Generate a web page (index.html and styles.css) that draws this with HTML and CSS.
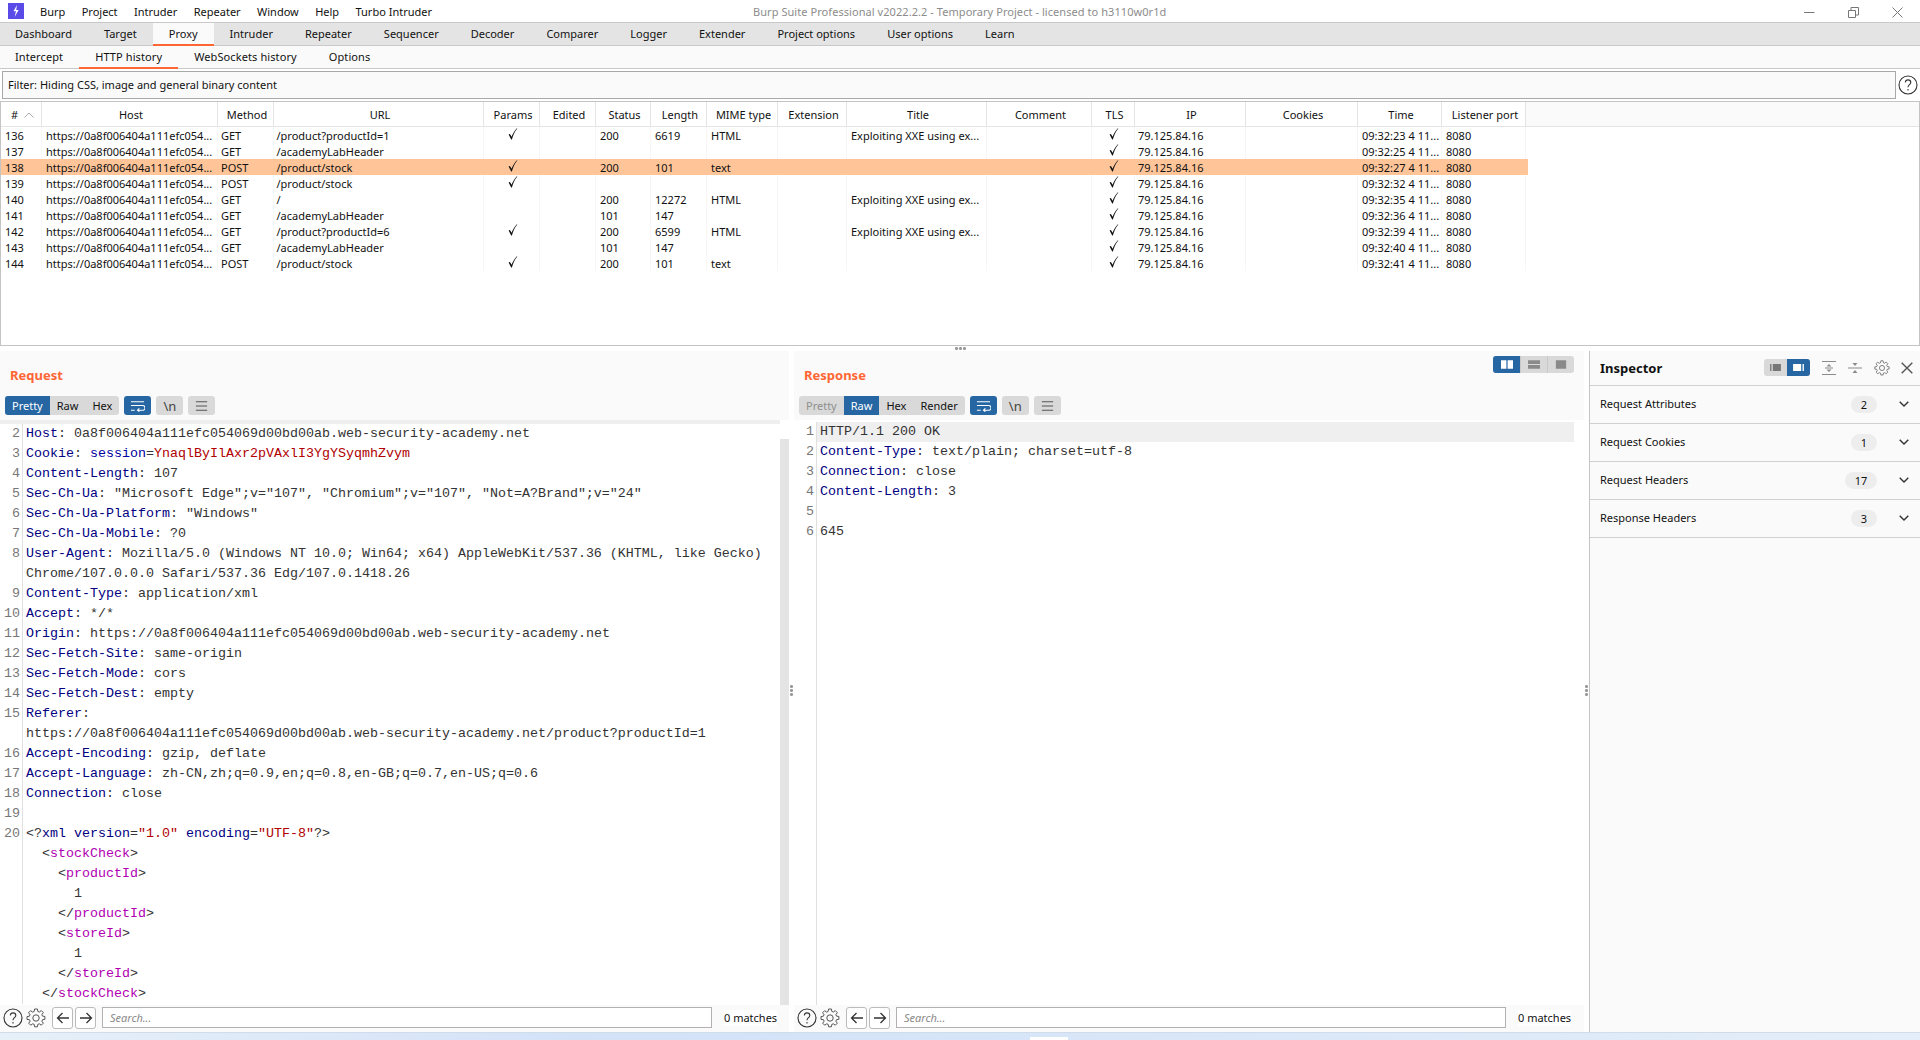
FILE: index.html
```html
<!DOCTYPE html>
<html lang="en">
<head>
<meta charset="utf-8">
<title>Burp Suite Professional</title>
<link rel="stylesheet" href="styles.css">
</head>
<body>
<svg class="defs" width="0" height="0"><defs><g id="gearpath"><path d="M8.6 1h2.8l.4 2.4 1.5.6 2-1.4 2 2-1.4 2 .6 1.5 2.4.4v2.8l-2.4.4-.6 1.5 1.4 2-2 2-2-1.4-1.5.6-.4 2.4H8.6l-.4-2.4-1.5-.6-2 1.4-2-2 1.4-2-.6-1.5L1 11.4V8.6l2.4-.4.6-1.5-1.4-2 2-2 2 1.4 1.5-.6Z"/><circle cx="10" cy="10" r="3.2"/></g><path id="ck" d="M.6 6.6 3.2 11.4 3.9 11.4C5 7.5 6.8 3.5 9.4.6L9 .3C6.7 2.6 4.7 5.7 3.6 8.8L1.9 5.9Z"/></defs></svg>
<div class="app">
  <header class="titlebar">
    <svg class="logo" viewBox="0 0 16 16"><rect width="16" height="16" fill="#5a4be8"/><path d="M9 2 5.5 8.3H8L6.6 14 10.6 7H8.2Z" fill="#fff"/></svg>
    <nav class="menu"><span>Burp</span><span>Project</span><span>Intruder</span><span>Repeater</span><span>Window</span><span>Help</span><span>Turbo Intruder</span></nav>
    <div class="apptitle">Burp Suite Professional v2022.2.2 - Temporary Project - licensed to h3110w0r1d</div>
    <div class="winctl">
      <svg viewBox="0 0 11 11"><path d="M0 5.5H10.5"/></svg>
      <svg viewBox="0 0 11 11"><path d="M.5 3.5H7.5V10.5H.5ZM3 3.5V.5H10.5V8H7.5"/></svg>
      <svg viewBox="0 0 11 11"><path d="M.5.5 10.5 10.5M10.5.5 .5 10.5"/></svg>
    </div>
  </header>
  <div class="tabs main">
    <span>Dashboard</span><span>Target</span><span class="on">Proxy</span><span>Intruder</span><span>Repeater</span><span>Sequencer</span><span>Decoder</span><span>Comparer</span><span>Logger</span><span>Extender</span><span>Project options</span><span>User options</span><span>Learn</span>
  </div>
  <div class="tabs sub">
    <span>Intercept</span><span class="on">HTTP history</span><span>WebSockets history</span><span>Options</span>
  </div>
  <div class="filterrow">
    <div class="filter">Filter: Hiding CSS, image and general binary content</div>
    <svg class="help big" viewBox="0 0 20 20"><circle cx="10" cy="10" r="9"/><path d="M7.3 7.4C7.5 5.6 8.7 4.9 10 4.9c1.6 0 2.8 1 2.8 2.5 0 2.3-2.8 2.3-2.8 4.8"/><path d="M10 14v1.4"/></svg>
  </div>
  <div class="table">
    <div class="row head">
      <div class="c n">#<svg class="sort" viewBox="0 0 10 6"><path d="M.5 5.5 5 1l4.5 4.5"/></svg></div><div class="c host">Host</div><div class="c meth">Method</div><div class="c url">URL</div><div class="c par">Params</div><div class="c edi">Edited</div><div class="c sta">Status</div><div class="c len">Length</div><div class="c mim">MIME type</div><div class="c ext">Extension</div><div class="c tit">Title</div><div class="c com">Comment</div><div class="c tls">TLS</div><div class="c ip">IP</div><div class="c coo">Cookies</div><div class="c tim">Time</div><div class="c lis">Listener port</div>
    </div>
    <div class="row"><div class="c n">136</div><div class="c host">https://0a8f006404a111efc054...</div><div class="c meth">GET</div><div class="c url">/product?productId=1</div><div class="c par"><svg class="ck" viewBox="0 0 10 12"><use href="#ck"/></svg></div><div class="c edi"></div><div class="c sta">200</div><div class="c len">6619</div><div class="c mim">HTML</div><div class="c ext"></div><div class="c tit">Exploiting XXE using ex...</div><div class="c com"></div><div class="c tls"><svg class="ck" viewBox="0 0 10 12"><use href="#ck"/></svg></div><div class="c ip">79.125.84.16</div><div class="c coo"></div><div class="c tim">09:32:23 4 11...</div><div class="c lis">8080</div></div>
    <div class="row"><div class="c n">137</div><div class="c host">https://0a8f006404a111efc054...</div><div class="c meth">GET</div><div class="c url">/academyLabHeader</div><div class="c par"></div><div class="c edi"></div><div class="c sta"></div><div class="c len"></div><div class="c mim"></div><div class="c ext"></div><div class="c tit"></div><div class="c com"></div><div class="c tls"><svg class="ck" viewBox="0 0 10 12"><use href="#ck"/></svg></div><div class="c ip">79.125.84.16</div><div class="c coo"></div><div class="c tim">09:32:25 4 11...</div><div class="c lis">8080</div></div>
    <div class="row sel"><div class="c n">138</div><div class="c host">https://0a8f006404a111efc054...</div><div class="c meth">POST</div><div class="c url">/product/stock</div><div class="c par"><svg class="ck" viewBox="0 0 10 12"><use href="#ck"/></svg></div><div class="c edi"></div><div class="c sta">200</div><div class="c len">101</div><div class="c mim">text</div><div class="c ext"></div><div class="c tit"></div><div class="c com"></div><div class="c tls"><svg class="ck" viewBox="0 0 10 12"><use href="#ck"/></svg></div><div class="c ip">79.125.84.16</div><div class="c coo"></div><div class="c tim">09:32:27 4 11...</div><div class="c lis">8080</div></div>
    <div class="row"><div class="c n">139</div><div class="c host">https://0a8f006404a111efc054...</div><div class="c meth">POST</div><div class="c url">/product/stock</div><div class="c par"><svg class="ck" viewBox="0 0 10 12"><use href="#ck"/></svg></div><div class="c edi"></div><div class="c sta"></div><div class="c len"></div><div class="c mim"></div><div class="c ext"></div><div class="c tit"></div><div class="c com"></div><div class="c tls"><svg class="ck" viewBox="0 0 10 12"><use href="#ck"/></svg></div><div class="c ip">79.125.84.16</div><div class="c coo"></div><div class="c tim">09:32:32 4 11...</div><div class="c lis">8080</div></div>
    <div class="row"><div class="c n">140</div><div class="c host">https://0a8f006404a111efc054...</div><div class="c meth">GET</div><div class="c url">/</div><div class="c par"></div><div class="c edi"></div><div class="c sta">200</div><div class="c len">12272</div><div class="c mim">HTML</div><div class="c ext"></div><div class="c tit">Exploiting XXE using ex...</div><div class="c com"></div><div class="c tls"><svg class="ck" viewBox="0 0 10 12"><use href="#ck"/></svg></div><div class="c ip">79.125.84.16</div><div class="c coo"></div><div class="c tim">09:32:35 4 11...</div><div class="c lis">8080</div></div>
    <div class="row"><div class="c n">141</div><div class="c host">https://0a8f006404a111efc054...</div><div class="c meth">GET</div><div class="c url">/academyLabHeader</div><div class="c par"></div><div class="c edi"></div><div class="c sta">101</div><div class="c len">147</div><div class="c mim"></div><div class="c ext"></div><div class="c tit"></div><div class="c com"></div><div class="c tls"><svg class="ck" viewBox="0 0 10 12"><use href="#ck"/></svg></div><div class="c ip">79.125.84.16</div><div class="c coo"></div><div class="c tim">09:32:36 4 11...</div><div class="c lis">8080</div></div>
    <div class="row"><div class="c n">142</div><div class="c host">https://0a8f006404a111efc054...</div><div class="c meth">GET</div><div class="c url">/product?productId=6</div><div class="c par"><svg class="ck" viewBox="0 0 10 12"><use href="#ck"/></svg></div><div class="c edi"></div><div class="c sta">200</div><div class="c len">6599</div><div class="c mim">HTML</div><div class="c ext"></div><div class="c tit">Exploiting XXE using ex...</div><div class="c com"></div><div class="c tls"><svg class="ck" viewBox="0 0 10 12"><use href="#ck"/></svg></div><div class="c ip">79.125.84.16</div><div class="c coo"></div><div class="c tim">09:32:39 4 11...</div><div class="c lis">8080</div></div>
    <div class="row"><div class="c n">143</div><div class="c host">https://0a8f006404a111efc054...</div><div class="c meth">GET</div><div class="c url">/academyLabHeader</div><div class="c par"></div><div class="c edi"></div><div class="c sta">101</div><div class="c len">147</div><div class="c mim"></div><div class="c ext"></div><div class="c tit"></div><div class="c com"></div><div class="c tls"><svg class="ck" viewBox="0 0 10 12"><use href="#ck"/></svg></div><div class="c ip">79.125.84.16</div><div class="c coo"></div><div class="c tim">09:32:40 4 11...</div><div class="c lis">8080</div></div>
    <div class="row"><div class="c n">144</div><div class="c host">https://0a8f006404a111efc054...</div><div class="c meth">POST</div><div class="c url">/product/stock</div><div class="c par"><svg class="ck" viewBox="0 0 10 12"><use href="#ck"/></svg></div><div class="c edi"></div><div class="c sta">200</div><div class="c len">101</div><div class="c mim">text</div><div class="c ext"></div><div class="c tit"></div><div class="c com"></div><div class="c tls"><svg class="ck" viewBox="0 0 10 12"><use href="#ck"/></svg></div><div class="c ip">79.125.84.16</div><div class="c coo"></div><div class="c tim">09:32:41 4 11...</div><div class="c lis">8080</div></div>
  </div>
  <div class="grip top"><i></i><i></i><i></i></div>
  <div class="lower">
    <section class="pane req">
      <div class="panehead">
        <h2>Request</h2>
        <div class="tools">
          <div class="seg"><span class="on">Pretty</span><span>Raw</span><span>Hex</span></div>
          <div class="tbtn on"><svg viewBox="0 0 16 12"><path d="M1 1.5H15M1 5.5H13.5a2 2 0 0 1 0 5H8M10 8.5 8 10.5 10 12M1 10.5H5"/></svg></div>
          <div class="tbtn nl">\n</div>
          <div class="tbtn"><svg viewBox="0 0 16 12"><path d="M2 1.5H14M2 6H14M2 10.5H14"/></svg></div>
        </div>
      </div>
      <div class="editor">
        <div class="code">
          <div class="l hl"></div>
          <div class="l"><b>2</b><p><em>Host</em>: 0a8f006404a111efc054069d00bd00ab.web-security-academy.net</p></div>
          <div class="l"><b>3</b><p><em>Cookie</em>: <em class="k">session</em>=<u>YnaqlByIlAxr2pVAxlI3YgYSyqmhZvym</u></p></div>
          <div class="l"><b>4</b><p><em>Content-Length</em>: 107</p></div>
          <div class="l"><b>5</b><p><em>Sec-Ch-Ua</em>: "Microsoft Edge";v="107", "Chromium";v="107", "Not=A?Brand";v="24"</p></div>
          <div class="l"><b>6</b><p><em>Sec-Ch-Ua-Platform</em>: "Windows"</p></div>
          <div class="l"><b>7</b><p><em>Sec-Ch-Ua-Mobile</em>: ?0</p></div>
          <div class="l"><b>8</b><p><em>User-Agent</em>: Mozilla/5.0 (Windows NT 10.0; Win64; x64) AppleWebKit/537.36 (KHTML, like Gecko)<br>Chrome/107.0.0.0 Safari/537.36 Edg/107.0.1418.26</p></div>
          <div class="l"><b>9</b><p><em>Content-Type</em>: application/xml</p></div>
          <div class="l"><b>10</b><p><em>Accept</em>: */*</p></div>
          <div class="l"><b>11</b><p><em>Origin</em>: https://0a8f006404a111efc054069d00bd00ab.web-security-academy.net</p></div>
          <div class="l"><b>12</b><p><em>Sec-Fetch-Site</em>: same-origin</p></div>
          <div class="l"><b>13</b><p><em>Sec-Fetch-Mode</em>: cors</p></div>
          <div class="l"><b>14</b><p><em>Sec-Fetch-Dest</em>: empty</p></div>
          <div class="l"><b>15</b><p><em>Referer</em>:<br>https://0a8f006404a111efc054069d00bd00ab.web-security-academy.net/product?productId=1</p></div>
          <div class="l"><b>16</b><p><em>Accept-Encoding</em>: gzip, deflate</p></div>
          <div class="l"><b>17</b><p><em>Accept-Language</em>: zh-CN,zh;q=0.9,en;q=0.8,en-GB;q=0.7,en-US;q=0.6</p></div>
          <div class="l"><b>18</b><p><em>Connection</em>: close</p></div>
          <div class="l"><b>19</b><p></p></div>
          <div class="l"><b>20</b><p>&lt;?<em>xml</em> <em>version</em>=<u>"1.0"</u> <em>encoding</em>=<u>"UTF-8"</u>?&gt;</p></div>
          <div class="l"><b></b><p class="i1">&lt;<s>stockCheck</s>&gt;</p></div>
          <div class="l"><b></b><p class="i2">&lt;<s>productId</s>&gt;</p></div>
          <div class="l"><b></b><p class="i3">1</p></div>
          <div class="l"><b></b><p class="i2">&lt;/<s>productId</s>&gt;</p></div>
          <div class="l"><b></b><p class="i2">&lt;<s>storeId</s>&gt;</p></div>
          <div class="l"><b></b><p class="i3">1</p></div>
          <div class="l"><b></b><p class="i2">&lt;/<s>storeId</s>&gt;</p></div>
          <div class="l"><b></b><p class="i1">&lt;/<s>stockCheck</s>&gt;</p></div>
        </div>
        <div class="scroll"></div>
      </div>
      <div class="searchbar">
        <svg class="help" viewBox="0 0 20 20"><circle cx="10" cy="10" r="9"/><path d="M7.3 7.4C7.5 5.6 8.7 4.9 10 4.9c1.6 0 2.8 1 2.8 2.5 0 2.3-2.8 2.3-2.8 4.8"/><path d="M10 14v1.4"/></svg>
        <svg class="gear" viewBox="0 0 20 20"><use href="#gearpath"/></svg>
        <div class="arrow"><svg viewBox="0 0 14 12"><path d="M13 6H2M6.5 1 1.5 6l5 5"/></svg></div>
        <div class="arrow"><svg viewBox="0 0 14 12"><path d="M1 6H12M7.5 1l5 5-5 5"/></svg></div>
        <div class="search">Search...</div>
        <div class="matches">0 matches</div>
      </div>
    </section>
    <div class="splitter"><span class="grip v"><i></i><i></i><i></i></span></div>
    <section class="pane res">
      <div class="panehead">
        <h2>Response</h2>
        <div class="viewtoggle">
          <span class="on"><svg viewBox="0 0 14 10"><path d="M0 0H6.3V10H0ZM7.7 0H14V10H7.7Z"/></svg></span>
          <span><svg viewBox="0 0 14 10"><path d="M0 0H14V4.3H0ZM0 5.7H14V10H0Z"/></svg></span>
          <span><svg viewBox="0 0 14 10"><path d="M1 0H13V10H1Z"/></svg></span>
        </div>
        <div class="tools">
          <div class="seg"><span class="off">Pretty</span><span class="on">Raw</span><span>Hex</span><span>Render</span></div>
          <div class="tbtn on"><svg viewBox="0 0 16 12"><path d="M1 1.5H15M1 5.5H13.5a2 2 0 0 1 0 5H8M10 8.5 8 10.5 10 12M1 10.5H5"/></svg></div>
          <div class="tbtn nl">\n</div>
          <div class="tbtn"><svg viewBox="0 0 16 12"><path d="M2 1.5H14M2 6H14M2 10.5H14"/></svg></div>
        </div>
      </div>
      <div class="editor">
        <div class="code">
          <div class="l cur"><b>1</b><p>HTTP/1.1 200 OK</p></div>
          <div class="l"><b>2</b><p><em>Content-Type</em>: text/plain; charset=utf-8</p></div>
          <div class="l"><b>3</b><p><em>Connection</em>: close</p></div>
          <div class="l"><b>4</b><p><em>Content-Length</em>: 3</p></div>
          <div class="l"><b>5</b><p></p></div>
          <div class="l"><b>6</b><p>645</p></div>
          <div class="l rest"><b></b></div>
        </div>
      </div>
      <div class="searchbar">
        <svg class="help" viewBox="0 0 20 20"><circle cx="10" cy="10" r="9"/><path d="M7.3 7.4C7.5 5.6 8.7 4.9 10 4.9c1.6 0 2.8 1 2.8 2.5 0 2.3-2.8 2.3-2.8 4.8"/><path d="M10 14v1.4"/></svg>
        <svg class="gear" viewBox="0 0 20 20"><use href="#gearpath"/></svg>
        <div class="arrow"><svg viewBox="0 0 14 12"><path d="M13 6H2M6.5 1 1.5 6l5 5"/></svg></div>
        <div class="arrow"><svg viewBox="0 0 14 12"><path d="M1 6H12M7.5 1l5 5-5 5"/></svg></div>
        <div class="search">Search...</div>
        <div class="matches">0 matches</div>
      </div>
    </section>
    <div class="splitter two"><span class="grip v"><i></i><i></i><i></i></span></div>
    <aside class="inspector">
      <div class="ihead">
        <h3>Inspector</h3>
        <div class="itoggle">
          <span><svg viewBox="0 0 12 10"><path d="M0 1H1.5V9H0ZM3 1H12V9H3Z"/></svg></span>
          <span class="on"><svg viewBox="0 0 12 10"><path d="M0 1H9V9H0ZM10.5 1H12V9H10.5Z"/></svg></span>
        </div>
        <svg class="iic" viewBox="0 0 14 14"><path d="M0 .5H14M0 13.5H14M3 7H11"/><path class="fill" d="M7 3 9.5 5.5H4.5ZM7 11 4.5 8.5H9.5Z"/></svg>
        <svg class="iic" viewBox="0 0 14 14"><path d="M0 7H14"/><path class="fill" d="M7 5 4.5 2H9.5ZM7 9 9.5 12H4.5Z"/></svg>
        <svg class="igear" viewBox="0 0 20 20"><use href="#gearpath"/></svg>
        <svg class="iclose" viewBox="0 0 12 12"><path d="M.7.7 11.3 11.3M11.3.7.7 11.3"/></svg>
      </div>
      <div class="irow"><span>Request Attributes</span><i>2</i><svg viewBox="0 0 10 6"><path d="M.7.7 5 5l4.3-4.3"/></svg></div>
      <div class="irow"><span>Request Cookies</span><i>1</i><svg viewBox="0 0 10 6"><path d="M.7.7 5 5l4.3-4.3"/></svg></div>
      <div class="irow"><span>Request Headers</span><i class="w">17</i><svg viewBox="0 0 10 6"><path d="M.7.7 5 5l4.3-4.3"/></svg></div>
      <div class="irow"><span>Response Headers</span><i>3</i><svg viewBox="0 0 10 6"><path d="M.7.7 5 5l4.3-4.3"/></svg></div>
    </aside>
  </div>
  <div class="desk"><span></span></div>
</div>
</body>
</html>
```
FILE: styles.css
```css
* { box-sizing: border-box; }
html, body { margin: 0; height: 100%; }
body { font: 11px/16px "Noto Sans", "Open Sans", sans-serif; color: #111; background: #fff; overflow: hidden; }
p, h2, h3 { margin: 0; }
em, s, u { font-style: normal; text-decoration: none; }
.defs { position: absolute; }
.app { width: 1920px; height: 1040px; display: flex; flex-direction: column; }

.titlebar { height: 23px; flex: none; display: flex; align-items: center; position: relative; border-bottom: 1px solid #c9c9c9; background: #fff; }
.logo { width: 16px; height: 16px; margin: 0 16px 0 8px; flex: none; }
.menu { display: flex; gap: 16.4px; padding-top: 1px; }
.apptitle { position: absolute; left: 753px; top: 4px; color: #8c8c8c; letter-spacing: .06px; }
.winctl { position: absolute; right: 0; top: 0; width: 121px; display: flex; }
.winctl svg { width: 11px; height: 11px; fill: none; stroke: #777; margin-top: 7px; margin-left: 33px; }
.winctl svg:first-child { margin-left: 5px; }

.tabs { display: flex; flex: none; height: 23px; border-bottom: 1px solid #c9c9c9; }
.tabs span { padding: 0 16px; line-height: 22px; position: relative; }
.tabs span:first-child { margin-left: -1px; }
.tabs span.on::after { content: ""; position: absolute; left: 0; right: 0; bottom: -1px; height: 2px; background: #ff6633; }
.tabs.main { background: #e4e4e4; }
.tabs.main span.on { background: #fafafa; }
.tabs.sub { background: #fafafa; }
.tabs.sub span { letter-spacing: .1px; }

.filterrow { height: 32px; flex: none; display: flex; align-items: flex-start; padding-top: 2px; background: #fff; }
.filter { margin-left: 2px; width: 1894px; height: 28px; border: 1px solid #a8a8a8; background: #fafafa; line-height: 25px; padding-left: 5px; }
.help { width: 20px; height: 20px; fill: none; stroke: #333; stroke-width: 1.1; flex: none; }
.help.big { margin: 4px 0 0 2px; }

.table { height: 245px; flex: none; border: 1px solid #c4c4c4; background: #fff; }
.row { display: flex; height: 16px; width: 1527px; }
.row.head { height: 25px; border-bottom: 1px solid #e4e4e4; background: #fafafa; width: auto; }
.row.head .c { text-align: center; line-height: 26px; border-right: 1px solid #e4e4e4; padding: 0 1px 0 4px; background: #fff; }
.row.sel { background: #ffc599; }
.c { padding-left: 4px; white-space: nowrap; overflow: hidden; flex: none; line-height: 18px; height: 100%; border-right: 1px solid #f6f6f6; }
.row.sel .c { border-color: transparent; }
.n { width: 41px; } .host { width: 176px; } .meth { width: 56px; padding-left: 3px; } .url { width: 210px; padding-left: 2.5px; }
.par { width: 56px; text-align: center; padding: 1px 0 0 2px; line-height: 0; } .edi { width: 56px; } .sta { width: 55px; } .len { width: 56px; }
.mim { width: 71px; } .ext { width: 69px; } .tit { width: 140px; } .com { width: 105px; }
.tls { width: 43px; text-align: center; padding: 1px 0 0 2px; line-height: 0; } .ip { width: 111px; padding-left: 3px; } .coo { width: 112px; } .tim { width: 84px; } .lis { width: 84px; }
.sort { width: 10px; height: 6px; fill: none; stroke: #aaa; margin-left: 6px; vertical-align: 1px; }
.ck { width: 10px; height: 12px; fill: #111; }

.grip { display: flex; gap: 1.5px; }
.grip i { width: 2.5px; height: 2.5px; border-radius: 50%; background: #999; }
.grip.top { position: absolute; left: 955px; top: 347px; }
.lower { height: 681px; flex: none; margin-top: 5px; display: flex; min-height: 0; }
.pane { display: flex; flex-direction: column; background: #fff; }
.req { width: 789px; }
.res { width: 790px; }
.splitter { width: 5px; position: relative; background: #fff; }
.grip.v { position: absolute; left: 1px; top: 334px; flex-direction: column; }
.panehead { height: 69px; flex: none; background: #fafafa; padding: 15px 5px 0; position: relative; }
.panehead h2 { font-size: 13px; font-weight: 700; color: #ff6633; line-height: 18px; padding-left: 5px; }
.tools { display: flex; gap: 5px; margin-top: 12px; height: 19px; }
.seg { display: flex; background: #d9d9d9; border-radius: 3px; overflow: hidden; }
.seg span { padding: 0 7px; line-height: 19px; }
.seg .on { background: #2566a3; color: #fff; }
.seg .off { color: #8f8f8f; }
.tbtn { width: 27px; background: #d9d9d9; border-radius: 3px; display: flex; align-items: center; justify-content: center; color: #444; font-size: 13px; }
.tbtn.on { background: #2566a3; }
.tbtn svg { width: 15px; height: 12px; fill: none; stroke: #555; stroke-width: 1.2; }
.tbtn.on svg { stroke: #fff; }
.viewtoggle { position: absolute; right: 10px; top: 5px; display: flex; height: 17px; background: #d9d9d9; border-radius: 3px; overflow: hidden; }
.viewtoggle span { width: 27px; display: flex; align-items: center; justify-content: center; border-left: 1px solid #c9c9c9; }
.viewtoggle span.on { background: #2566a3; border: 0; }
.viewtoggle svg { width: 12px; height: 9px; fill: #8a8a8a; }
.viewtoggle .on svg { fill: #fff; }

.editor { flex: 1; min-height: 0; display: flex; position: relative; overflow: hidden; }
.code { flex: 1; display: flex; flex-direction: column; overflow: hidden; font: 13.33px/20px "Liberation Mono", "Courier New", monospace; color: #333; }
.l { display: flex; min-height: 20px; flex: none; }
.l b { width: 23px; flex: none; font-weight: 400; color: #777; text-align: right; padding-right: 2px; border-right: 1px solid #e0e0e0; }
.l p { padding-left: 3px; white-space: pre; }
.l.hl { min-height: 4px; height: 4px; background: #efefef; }
.l.cur { margin-top: 2px; width: 780px; }
.l.cur p { flex: 1; background: #efefef; }
.l.rest { flex: 1; }
.l em { color: #000080; }
.l em.k { color: #0000a0; }
.l u { color: #b00000; }
.l s { color: #b000b0; }
.i1 { margin-left: 16px; } .i2 { margin-left: 32px; } .i3 { margin-left: 48px; }
.scroll { width: 9px; background: #e4e4e4; margin-top: 19px; flex: none; }

.searchbar { height: 27px; flex: none; background: #fafafa; display: flex; align-items: center; padding: 0 0 2px 3px; }
.gear { width: 20px; height: 20px; fill: none; stroke: #555; margin-left: 3px; flex: none; }
.arrow { width: 21px; height: 22px; border: 1px solid #bbb; border-radius: 3px; background: #fff; margin-left: 2px; display: flex; align-items: center; justify-content: center; }
.gear + .arrow { margin-left: 6px; }
.arrow svg { width: 14px; height: 12px; fill: none; stroke: #333; stroke-width: 1.3; }
.search { width: 610px; height: 21px; border: 1px solid #b5b0b0; background: #fff; margin-left: 6px; padding-left: 7px; font-style: italic; color: #888; line-height: 19px; }
.matches { margin-left: 12px; white-space: nowrap; background: #fff; }

.inspector { flex: 1; background: #fafafa; border-left: 1px solid #c4c4c4; }
.ihead { height: 35px; display: flex; align-items: center; border-bottom: 1px solid #d0d0d0; padding: 0 0 1px 10px; }
.ihead h3 { font-size: 13px; font-weight: 700; color: #111; flex: 1; }
.itoggle { display: flex; height: 17px; width: 46px; background: #d9d9d9; border-radius: 3px; overflow: hidden; margin-right: 12px; }
.itoggle span { flex: 1; display: flex; align-items: center; justify-content: center; }
.itoggle span.on { background: #2566a3; }
.itoggle svg { width: 11px; height: 9px; fill: #777; }
.itoggle .on svg { fill: #fff; }
.iic { width: 14px; height: 14px; margin-right: 12px; fill: none; stroke: #8a8a8a; }
.iic .fill { fill: #8a8a8a; stroke: none; }
.igear { width: 16px; height: 16px; fill: none; stroke: #666; margin-right: 11px; }
.iclose { width: 12px; height: 12px; fill: none; stroke: #555; stroke-width: 1.4; margin-right: 7px; }
.irow { height: 38px; display: flex; align-items: center; border-bottom: 1px solid #d0d0d0; padding: 0 0 1px 10px; }
.irow span { flex: 1; }
.irow i { width: 26px; height: 17px; border-radius: 9px; background: #ededed; font-style: normal; text-align: center; line-height: 17px; }
.irow i.w { width: 32px; }
.irow svg { width: 10px; height: 6px; fill: none; stroke: #333; stroke-width: 1.4; margin: 0 11px 0 22px; }

.desk { flex: 1; background: linear-gradient(90deg, #e6f0f8, #d4e2f8 30%, #d8e6f8 60%, #e4eef8); position: relative; border-top: 1px solid #d0dcea; }
.desk span { position: absolute; left: 1030px; bottom: 0; width: 38px; height: 3px; background: #fff; }
```
